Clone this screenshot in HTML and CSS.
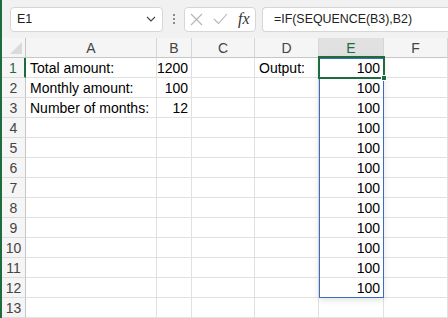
FILE: index.html
```html
<!DOCTYPE html>
<html>

<head>
  <meta charset="UTF-8">
  <title>SEQUENCE spill</title>
  <link rel="stylesheet" href="styles.css">
</head>

<body>
  <div class="app">
    <div class="toolbar">
      <div class="namebox">
        <span>E1</span>
        <svg width="10" height="6" viewBox="0 0 10 6"><path d="M1 1l4 4 4-4" fill="none" stroke="#444" stroke-width="1.1"/></svg>
      </div>
      <div class="dots"><i></i><i></i><i></i></div>
      <div class="fxbox">
        <svg width="13" height="13" viewBox="0 0 13 13"><path d="M1 1l11 11M12 1L1 12" fill="none" stroke="#b4b4b4" stroke-width="1.1"/></svg>
        <svg width="15" height="12" viewBox="0 0 15 12"><path d="M1 6l4.5 4.5L14 1" fill="none" stroke="#b4b4b4" stroke-width="1.1"/></svg>
        <span class="fx">fx</span>
      </div>
      <div class="formula">=IF(SEQUENCE(B3),B2)</div>
    </div>

    <div class="sheet">
      <div class="cell corner"><span class="tri"></span></div>
      <div class="cell ch">A</div>
      <div class="cell ch">B</div>
      <div class="cell ch">C</div>
      <div class="cell ch">D</div>
      <div class="cell ch ch-active">E</div>
      <div class="cell ch">F</div>

      <div class="cell rh rh-active">1</div>
      <div class="cell">Total amount:</div>
      <div class="cell num">1200</div>
      <div class="cell"></div>
      <div class="cell">Output:</div>
      <div class="cell num">100</div>
      <div class="cell"></div>

      <div class="cell rh">2</div>
      <div class="cell">Monthly amount:</div>
      <div class="cell num">100</div>
      <div class="cell"></div>
      <div class="cell"></div>
      <div class="cell num">100</div>
      <div class="cell"></div>

      <div class="cell rh">3</div>
      <div class="cell">Number of months:</div>
      <div class="cell num">12</div>
      <div class="cell"></div>
      <div class="cell"></div>
      <div class="cell num">100</div>
      <div class="cell"></div>

      <div class="cell rh">4</div>
      <div class="cell"></div><div class="cell"></div><div class="cell"></div><div class="cell"></div>
      <div class="cell num">100</div>
      <div class="cell"></div>

      <div class="cell rh">5</div>
      <div class="cell"></div><div class="cell"></div><div class="cell"></div><div class="cell"></div>
      <div class="cell num">100</div>
      <div class="cell"></div>

      <div class="cell rh">6</div>
      <div class="cell"></div><div class="cell"></div><div class="cell"></div><div class="cell"></div>
      <div class="cell num">100</div>
      <div class="cell"></div>

      <div class="cell rh">7</div>
      <div class="cell"></div><div class="cell"></div><div class="cell"></div><div class="cell"></div>
      <div class="cell num">100</div>
      <div class="cell"></div>

      <div class="cell rh">8</div>
      <div class="cell"></div><div class="cell"></div><div class="cell"></div><div class="cell"></div>
      <div class="cell num">100</div>
      <div class="cell"></div>

      <div class="cell rh">9</div>
      <div class="cell"></div><div class="cell"></div><div class="cell"></div><div class="cell"></div>
      <div class="cell num">100</div>
      <div class="cell"></div>

      <div class="cell rh">10</div>
      <div class="cell"></div><div class="cell"></div><div class="cell"></div><div class="cell"></div>
      <div class="cell num">100</div>
      <div class="cell"></div>

      <div class="cell rh">11</div>
      <div class="cell"></div><div class="cell"></div><div class="cell"></div><div class="cell"></div>
      <div class="cell num">100</div>
      <div class="cell"></div>

      <div class="cell rh">12</div>
      <div class="cell"></div><div class="cell"></div><div class="cell"></div><div class="cell"></div>
      <div class="cell num">100</div>
      <div class="cell"></div>

      <div class="cell rh">13</div>
      <div class="cell"></div><div class="cell"></div><div class="cell"></div><div class="cell"></div>
      <div class="cell"></div>
      <div class="cell"></div>

      <!-- spill range and active cell sit over the grid -->
      <div class="spill"></div>
      <div class="selected"></div>
      <div class="handle"></div>
    </div>
  </div>
</body>

</html>
```

FILE: styles.css
```css
* {
  box-sizing: border-box;
}

body {
  margin: 0;
  background: #fff;
  font-family: "Liberation Sans", Arial, sans-serif;
  overflow: hidden;
}

.app {
  border-left: 2px solid #1e6b40;
  height: 318px;
  overflow: hidden;
}

.toolbar {
  display: flex;
  align-items: center;
  height: 38px;
  background: #f1f1f1;
  padding-left: 8px;
}

.toolbar > * {
  flex-shrink: 0;
}

.namebox {
  display: flex;
  align-items: center;
  justify-content: space-between;
  width: 153px;
  height: 25px;
  background: #fff;
  border: 1px solid #d6d6d6;
  border-radius: 4px;
  padding: 0 6px 0 6px;
  font-size: 12.5px;
  color: #222;
}

.dots {
  width: 21px;
  display: flex;
  flex-direction: column;
  align-items: center;
  gap: 2px;
}

.dots i {
  width: 2px;
  height: 2px;
  background: #8a8a8a;
}

.fxbox {
  display: flex;
  align-items: center;
  width: 72px;
  height: 25px;
  background: #fff;
  border: 1px solid #d6d6d6;
  border-radius: 4px;
  padding: 0 0 0 5px;
  gap: 10px;
}

.fx {
  font-family: "Liberation Serif", serif;
  font-style: italic;
  font-size: 16px;
  color: #333;
}

.formula {
  margin-left: 6px;
  width: 200px;
  height: 25px;
  line-height: 23px;
  background: #fff;
  border: 1px solid #d6d6d6;
  border-right: none;
  border-radius: 4px 0 0 4px;
  padding-left: 11px;
  font-size: 12.4px;
  color: #222;
}

.sheet {
  position: relative;
  display: grid;
  grid-template-columns: 24px 131px 35px 63px 64px 65px 1fr;
  grid-auto-rows: 20px;
  font-size: 14px;
  color: #000;
}

.cell {
  border-right: 1px solid #e1e1e1;
  border-bottom: 1px solid #e1e1e1;
  padding: 0 3px 0 4px;
  line-height: 20px;
  white-space: nowrap;
}

.num {
  text-align: right;
  padding-left: 0;
}

.ch,
.rh,
.corner {
  background: #f5f5f5;
  color: #444;
  text-align: center;
  padding: 0;
}

.ch {
  border-right-color: #d6d6d6;
  border-bottom-color: #c6c6c6;
}

.ch-active {
  background: #e1e1e1;
  color: #1e6b40;
  border-bottom: 2px solid #1e6b40;
}

.rh {
  border-right-color: #c6c6c6;
  border-bottom-color: #dcdcdc;
}

.rh-active {
  color: #1e6b40;
  border-right: 2px solid #1e6b40;
}

.corner {
  position: relative;
  border-right-color: #c6c6c6;
  border-bottom-color: #c6c6c6;
}

.tri {
  position: absolute;
  right: 3px;
  bottom: 3px;
  border-left: 12px solid transparent;
  border-bottom: 12px solid #dadada;
}

.spill {
  position: absolute;
  left: 317px;
  top: 20px;
  width: 65px;
  height: 240px;
  border: 1px solid #3b6cc0;
  box-shadow: 0 2px 7px rgba(0, 0, 0, 0.12);
}

.selected {
  position: absolute;
  left: 316px;
  top: 18px;
  width: 67px;
  height: 23px;
  border: 2px solid #1e6b40;
}

.handle {
  position: absolute;
  left: 379px;
  top: 37px;
  width: 6px;
  height: 6px;
  background: #1e6b40;
  border: 1px solid #fff;
}
```
